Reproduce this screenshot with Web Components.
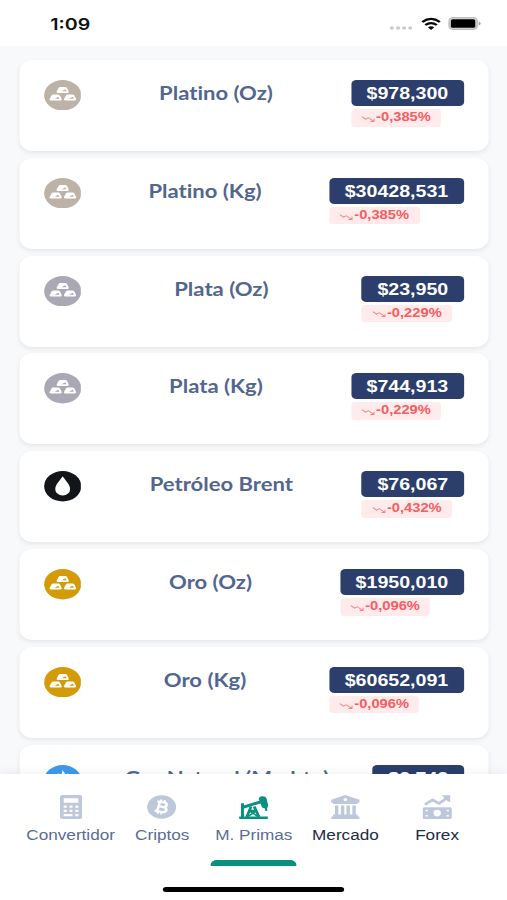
<!DOCTYPE html>
<html lang="es">
<head>
<meta charset="utf-8">
<title>Materias Primas</title>
<style>
html,body{margin:0;padding:0;width:507px;height:900px;overflow:hidden;background:#fff}
</style>
</head>
<body>
<market-app></market-app>
<script>
const define = (name, render) => customElements.define(name, class extends HTMLElement {
  connectedCallback() {
    if (this.shadowRoot) return;
    this.attachShadow({ mode: 'open' }).innerHTML = render(this);
  }
});

/* Ingot: rounded trapezoid with a small facet cut into its face */
const ingot = (x, y) => `<g transform="translate(${x} ${y})"><path d="M1.700 1Q2.100 0 3.200 0H7Q8 0 8.400.8L9.900 4.500Q10.200 5.800 9 6H1Q-.2 5.800.1 4.600Z" fill="#fff"/><path d="M3 4.300Q5 4.100 5.900 3Q6.900 2.200 7.300 2.700L8.100 4.400Z" fill="var(--disc)"/></g>`;
const COMMODITY = {
  bars: ingot(10, 6.8) + ingot(4.3, 14.2) + ingot(15.9, 14.2),
  drop: '<path d="M15 5.2C17 9.2 21 13.4 21 17.9A6 6.2 0 0 1 9 17.9C9 13.4 13 9.2 15 5.2Z" fill="#fff"/>',
  flame: '<path d="M14.5 5C17 8 17 9.500 18 10C19 10 19 8.500 19 8C22 12 22.500 15 21 19Q19 24 14 24Q8 23 8 17C8 13 11 11 11 8Q12.500 9 12.500 11Q15 9 14.500 5Z" fill="#fff"/>'
};
define('commodity-icon', el => `
<style>:host{display:block;flex:none;width:30.400px;height:30.400px}svg{display:block;width:100%;height:100%}</style>
<svg viewBox="0 0 30 30" style="--disc:${el.getAttribute('color')}"><circle cx="15" cy="15" r="15" fill="var(--disc)"/>${COMMODITY[el.getAttribute('kind')]}</svg>`);

define('price-tag', () => `
<style>
:host{display:flex;flex-direction:column;align-items:flex-start;gap:3px;flex:none;font-family:"Liberation Sans",Arial,sans-serif;font-weight:700}
.price{height:26px;line-height:28px;padding:0 12.700px;border-radius:4px;background:#2b3e6c;color:#fff;font-size:16px}
.change{display:flex;align-items:center;height:17.500px;line-height:17.500px;padding:0 8.500px;border-radius:3px;background:#ffebeb;color:#f65c60;font-size:12px}
svg{width:11.500px;height:10px;margin-right:.5px;margin-top:2px}
</style>
<div class="price"><slot name="price"></slot></div>
<div class="change"><svg viewBox="0 0 12 10" fill="none" stroke="#f58286" stroke-width=".9"><path d="M.5 2.500L3.700 5.200L6 3.700L10.600 7.400M10.900 4.700V7.600H7.900"/></svg><span><slot name="change"></slot></span></div>`);

define('commodity-card', el => `
<style>
:host{display:flex;justify-content:space-between;align-items:flex-start;box-sizing:border-box;height:91px;flex:none;padding:20px 19.800px 20px 20.200px;border-radius:11px;background:#fff;box-shadow:0 2px 4px rgba(40,50,60,.09)}
.name{font:700 18px/27px Lato,sans-serif;font-variant-ligatures:none;color:#526690;white-space:nowrap}
</style>
<commodity-icon kind="${el.getAttribute('kind')}" color="${el.getAttribute('color')}"></commodity-icon>
<div class="name"><slot></slot></div>
<price-tag><span slot="price">${el.getAttribute('price')}</span><span slot="change">${el.getAttribute('change')}</span></price-tag>`);

define('status-bar', () => `
<style>
:host{display:flex;justify-content:space-between;align-items:center;box-sizing:border-box;height:46px;padding:1px 21px 0 41px;background:#fff;font:600 16px/20px Inter,sans-serif;color:#111}
.right{display:flex;align-items:center}
svg{display:block}
</style>
<div>1:09</div>
<div class="right">
<svg width="19" height="14" viewBox="0 0 19 14" fill="#cbcbcb"><circle cx="2" cy="11" r="1.700"/><circle cx="7" cy="11" r="1.700"/><circle cx="12" cy="11" r="1.700"/><circle cx="17" cy="11" r="1.700"/></svg>
<svg style="margin-left:6.500px" width="16" height="14" viewBox="0 0 16 14" fill="none" stroke="#080808" stroke-width="2.200"><path d="M.8 5Q8-1.300 15.200 5M3.300 8Q8 4.200 12.700 8"/><path d="M5.400 10.300Q8 8.300 10.600 10.300L8 13Z" fill="#080808" stroke="none"/></svg>
<svg style="margin-left:6px" width="27.500" height="13" viewBox="0 0 28 13"><rect x=".6" y=".6" width="23.500" height="11.800" rx="3.300" fill="#d8d8d8" stroke="#bcbcbc" stroke-width="1.200"/><rect x="2.200" y="2.200" width="20.300" height="8.600" rx="1.600" fill="#000"/><path d="M25.300 4.300Q27 5 27 6.500Q27 8 25.300 8.700Z" fill="#aaa"/></svg>
</div>`);

const NAV = {
  calculator: '<path fill-rule="evenodd" d="M4.800 0H19.200Q21 0 21 1.800V22.200Q21 24 19.200 24H4.800Q3 24 3 22.200V1.800Q3 0 4.800 0ZM6 3.200V7.800H18V3.200ZM6 10.500V12.800H8.500V10.500ZM10.800 10.500V12.800H13.200V10.500ZM15.500 10.500V12.800H18V10.500ZM6 14.800V17H8.500V14.800ZM10.800 14.800V17H13.200V14.800ZM15.500 14.800V17H18V14.800ZM6 19V21.200H13.200V19ZM15.500 19V21.200H18V19Z"/>',
  bitcoin: '<circle cx="12" cy="12" r="11.800"/><g transform="rotate(13 12 12)" fill="none" stroke="#fff" stroke-width="2.100"><path d="M7.300 7.200H13Q15.500 7.200 15.500 9.300Q15.500 11.700 13 11.700H9.500M13 11.700Q16.400 11.700 16.400 14.300Q16.400 16.800 13.300 16.800H7.300M9.400 7.200V16.800"/><path stroke-width="1.600" d="M10.200 4.700V7.500M13.200 4.700V7.500M10.200 16.500V19.300M13.200 16.500V19.300"/></g>',
  pump: '<path d="M.3 21.500H23.700V24H.3ZM1.800 8.300H4.200V21.500H1.800Z"/><path d="M2 11.200L17.500 5.500L18.500 8.200L3 13.900Z"/><path d="M16.300 4Q16.500 1.500 19 1.200Q22 .9 22.700 3.500L23.900 10Q24.200 12.500 22 13Q19.300 13.600 18.700 11.500Z"/><path d="M21 12H23.200V16H21.800Z"/><path fill="none" stroke="currentColor" stroke-width="2.300" d="M10 11.500L6.500 22M12.500 11.500L16.500 22M8.500 16H14.500"/><path fill="none" stroke="currentColor" stroke-width="1.500" d="M7.500 21.500L13.500 16.500M9.500 16.500L15.500 21.500"/>',
  bank: '<path fill-rule="evenodd" d="M12 0L23.500 4.700V7.700H22V9H2V7.700H.5V4.700ZM12 2.900A1.500 1.500 0 1 0 12 5.900A1.500 1.500 0 1 0 12 2.900ZM3.500 10.500H6.300V20H3.500ZM8.400 10.500H11.200V20H8.400ZM12.900 10.500H15.700V20H12.900ZM17.700 10.500H20.500V20H17.700Z"/><path d="M2 19.500H22V21.500H23.500V24H.5V21.500H2Z"/>',
  forex: '<path fill="none" stroke="currentColor" stroke-width="2.600" stroke-linejoin="round" stroke-linecap="round" d="M2.800 9L8.200 4.800L13.500 8.500L20 3"/><path d="M15.700.3H22.600V7.300L20.400 6L18 3.200Z"/><path fill-rule="evenodd" d="M1.500 12.200H22.500Q24 12.200 24 13.700V22.500Q24 24 22.500 24H1.500Q0 24 0 22.500V13.700Q0 12.200 1.500 12.200ZM12 14.800A3 3.300 0 1 0 12 21.400A3 3.300 0 1 0 12 14.800ZM2.500 14.700V16.300H4.300V14.700ZM2.500 19.900V21.500H4.300V19.900ZM19.700 14.700V16.300H21.500V14.700ZM19.700 19.900V21.500H21.500V19.900Z"/>'
};
define('nav-item', el => `
<style>
:host{display:flex;flex-direction:column;align-items:center;flex:1 1 0;min-width:0;height:92px;box-sizing:border-box;padding-top:21px;font:14px/18px "Liberation Sans",Arial,sans-serif;color:#5b6c94}
:host([dark]) .label{color:#212b43}
svg{display:block;width:24px;height:24px;color:#bfc8da;fill:currentColor}
:host([active]) svg{color:#09917f}
.label{margin-top:7px;white-space:nowrap}
.bar{margin-top:auto;width:70px;height:6px;border-radius:5px 5px 0 0;background:transparent}
:host([active]) .bar{background:#09917f}
</style>
<svg viewBox="0 0 24 24">${NAV[el.getAttribute('icon')]}</svg>
<div class="label"><slot></slot></div><div class="bar"></div>`);

define('bottom-nav', () => `
<style>
:host{display:flex;flex-direction:column;align-items:center;height:126px;flex:none;background:#fff;position:relative;box-shadow:0 -2px 8px rgba(40,50,60,.06)}
nav{display:flex;width:374px;margin-left:.6px}
.home{margin-top:21px;width:147.500px;height:5px;border-radius:3px;background:#000}
</style>
<nav><slot></slot></nav><div class="home"></div>`);

const row = (kind, color, name, price, change) =>
  `<commodity-card kind="${kind}" color="${color}" price="${price}" change="${change}">${name}</commodity-card>`;

/* The 414px-wide phone layout is widened to fill the window */
define('market-app', () => `
<style>
:host{display:flex;flex-direction:column;width:414px;height:900px;transform:scaleX(1.22464);transform-origin:0 0;background:#f8f9fb}
main{flex:1;min-height:0;overflow:hidden;box-sizing:border-box;padding:14px 15.500px 0;display:flex;flex-direction:column;gap:6.830px}
</style>
<status-bar></status-bar>
<main>
${row('bars', '#bcb2a7', 'Platino (Oz)', '$978,300', '-0,385%')}
${row('bars', '#bcb2a7', 'Platino (Kg)', '$30428,531', '-0,385%')}
${row('bars', '#a9a8b4', 'Plata (Oz)', '$23,950', '-0,229%')}
${row('bars', '#a9a8b4', 'Plata (Kg)', '$744,913', '-0,229%')}
${row('drop', '#121619', 'Petróleo Brent', '$76,067', '-0,432%')}
${row('bars', '#d39b08', 'Oro (Oz)', '$1950,010', '-0,096%')}
${row('bars', '#d39b08', 'Oro (Kg)', '$60652,091', '-0,096%')}
${row('flame', '#3d9aec', 'Gas Natural (Mmbtu)', '$2,743', '-0,096%')}
</main>
<bottom-nav>
<nav-item icon="calculator">Convertidor</nav-item>
<nav-item icon="bitcoin">Criptos</nav-item>
<nav-item icon="pump" active>M. Primas</nav-item>
<nav-item icon="bank" dark>Mercado</nav-item>
<nav-item icon="forex" dark>Forex</nav-item>
</bottom-nav>`);
</script>
</body>
</html>
